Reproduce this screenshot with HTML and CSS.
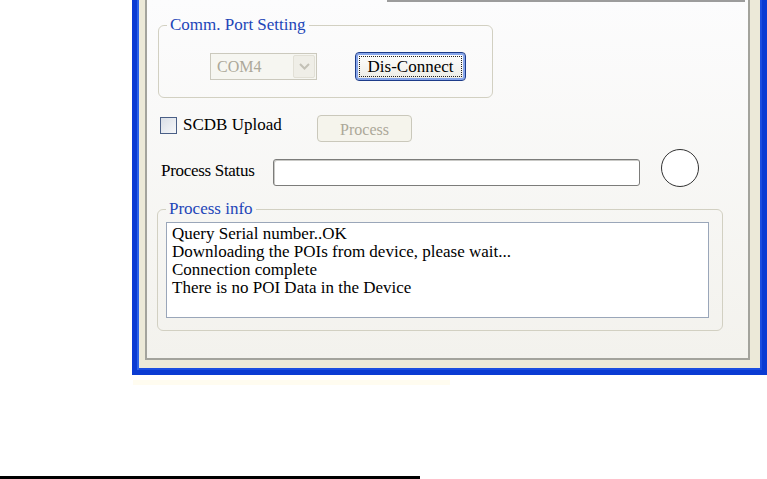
FILE: index.html
```html
<!DOCTYPE html>
<html>
<head>
<meta charset="utf-8">
<link rel="stylesheet" href="styles.css">
</head>
<body>
<div class="window">
  <div class="tab">
    <div class="stub"></div>
    <fieldset class="group port">
      <legend class="legend">Comm. Port Setting</legend>
      <div class="port-row">
        <div class="combo">
          <span class="combo-text">COM4</span>
          <span class="combo-btn">
            <svg width="11" height="7" viewBox="0 0 11 7"><path d="M1 1 L5.5 5.5 L10 1" fill="none" stroke="#c3c1b6" stroke-width="2"/></svg>
          </span>
        </div>
        <div class="btn focus"><span class="focus-ring">Dis-Connect</span></div>
      </div>
    </fieldset>
    <div class="upload-row">
      <div class="check-group">
        <span class="checkbox"></span>
        <span class="check-label">SCDB Upload</span>
      </div>
      <div class="btn disabled">Process</div>
    </div>
    <div class="status-row">
      <span class="status-label">Process Status</span>
      <div class="status-box"></div>
      <div class="lamp"></div>
    </div>
    <fieldset class="group info">
      <legend class="legend">Process info</legend>
      <div class="log">
        <div>Query Serial number..OK</div>
        <div>Downloading the POIs from device, please wait...</div>
        <div>Connection complete</div>
        <div>There is no POI Data in the Device</div>
      </div>
    </fieldset>
  </div>
</div>
<div class="strip"></div>
<div class="rule"></div>
</body>
</html>
```
FILE: styles.css
```css
html, body {
  margin: 0;
  padding: 0;
  background: #ffffff;
}
body {
  width: 767px;
  height: 479px;
  overflow: hidden;
  font-family: "Liberation Serif", "Times New Roman", serif;
  color: #000;
}
.window {
  box-sizing: border-box;
  margin-left: 132px;
  width: 635px;
  height: 375px;
  border: 5px solid #0a3bd3;
  border-top: 0;
  box-shadow: inset 2px 0 0 #2a62ea, inset -2px 0 0 #1a4de0, inset 0 -2px 0 #1a4de0;
  background: #ece9d8;
  padding: 0 12px 10px 8px;
}
.tab {
  box-sizing: border-box;
  height: 360px;
  border: 2px solid #a3a39c;
  border-top: 0;
  background: linear-gradient(#fcfcfd, #f3f2ed);
  display: flex;
  flex-direction: column;
  align-items: flex-start;
}
.stub {
  margin-left: 240px;
  width: 358px;
  height: 0;
  border-bottom: 2px solid #9c9c9c;
}
.group {
  margin: 0;
  padding: 0;
  border: 1px solid #d2d0c2;
  border-radius: 6px;
  min-inline-size: 0;
  box-sizing: border-box;
}
.legend {
  margin-left: 8px;
  padding: 0 3px;
  font-size: 17px;
  line-height: 20px;
  color: #1d45b8;
}
.port {
  margin-top: 13px;
  margin-left: 11px;
  width: 335px;
}
.port-row {
  display: flex;
  align-items: center;
  padding: 17px 0 16px 51px;
  gap: 38px;
}
.combo {
  box-sizing: border-box;
  width: 107px;
  height: 27px;
  border: 1px solid #cbc9bd;
  background: #f6f6f1;
  display: flex;
  align-items: center;
  justify-content: space-between;
  padding: 1px;
}
.combo-text {
  padding-left: 5px;
  font-size: 16px;
  color: #aca899;
}
.combo-btn {
  box-sizing: border-box;
  width: 22px;
  height: 23px;
  border: 1px solid #e2e0d6;
  border-radius: 2px;
  background: #efeee7;
  display: flex;
  align-items: center;
  justify-content: center;
}
.btn {
  box-sizing: border-box;
  border-radius: 4px;
  display: flex;
  align-items: center;
  justify-content: center;
  font-size: 16px;
}
.focus {
  width: 111px;
  height: 29px;
  border: 1px solid #1d3c8a;
  background: linear-gradient(#ffffff, #ecebe4);
  box-shadow: inset 0 0 0 2px #88a6ea;
  padding: 3px;
}
.focus-ring {
  flex: 1;
  align-self: stretch;
  display: flex;
  align-items: center;
  justify-content: center;
  border: 1px dotted #222;
  font-size: 17px;
}
.upload-row {
  margin-top: 17px;
  margin-left: 13px;
  display: flex;
  align-items: flex-start;
}
.check-group {
  width: 157px;
  display: flex;
  align-items: center;
  gap: 6px;
}
.checkbox {
  box-sizing: border-box;
  width: 17px;
  height: 17px;
  margin-top: 1px;
  border: 1px solid #4a5f86;
  background: linear-gradient(135deg, #d9dee6, #f6f7f9);
}
.check-label {
  font-size: 17px;
  line-height: 20px;
}
.disabled {
  width: 95px;
  height: 27px;
  border: 1px solid #cac8bb;
  background: #f5f4ec;
  color: #aca899;
  padding-top: 3px;
}
.status-row {
  margin-top: 7px;
  margin-left: 14px;
  display: flex;
  align-items: flex-start;
}
.status-label {
  margin-top: 12px;
  width: 112px;
  font-size: 17px;
  line-height: 20px;
  letter-spacing: -0.3px;
}
.status-box {
  box-sizing: border-box;
  margin-top: 10px;
  width: 367px;
  height: 27px;
  border: 1px solid #7c7c7a;
  border-radius: 3px;
  box-shadow: inset 1px 1px 0 #c9c9c6;
  background: #ffffff;
}
.lamp {
  box-sizing: border-box;
  margin-left: 21px;
  width: 38px;
  height: 38px;
  border: 1px solid #333;
  border-radius: 50%;
  background: #ffffff;
}
.info {
  margin-top: 12px;
  margin-left: 10px;
  width: 566px;
}
.log {
  box-sizing: border-box;
  margin: 3px 0 12px 8px;
  width: 543px;
  height: 96px;
  border: 1px solid #9aa6b9;
  background: #ffffff;
  padding: 2px 5px 0;
  font-size: 17px;
  line-height: 18px;
}
.strip {
  margin-top: 5px;
  margin-left: 133px;
  width: 317px;
  height: 5px;
  background: #fffcf0;
}
.rule {
  margin-top: 91px;
  width: 420px;
  height: 3px;
  background: #000;
}
```
